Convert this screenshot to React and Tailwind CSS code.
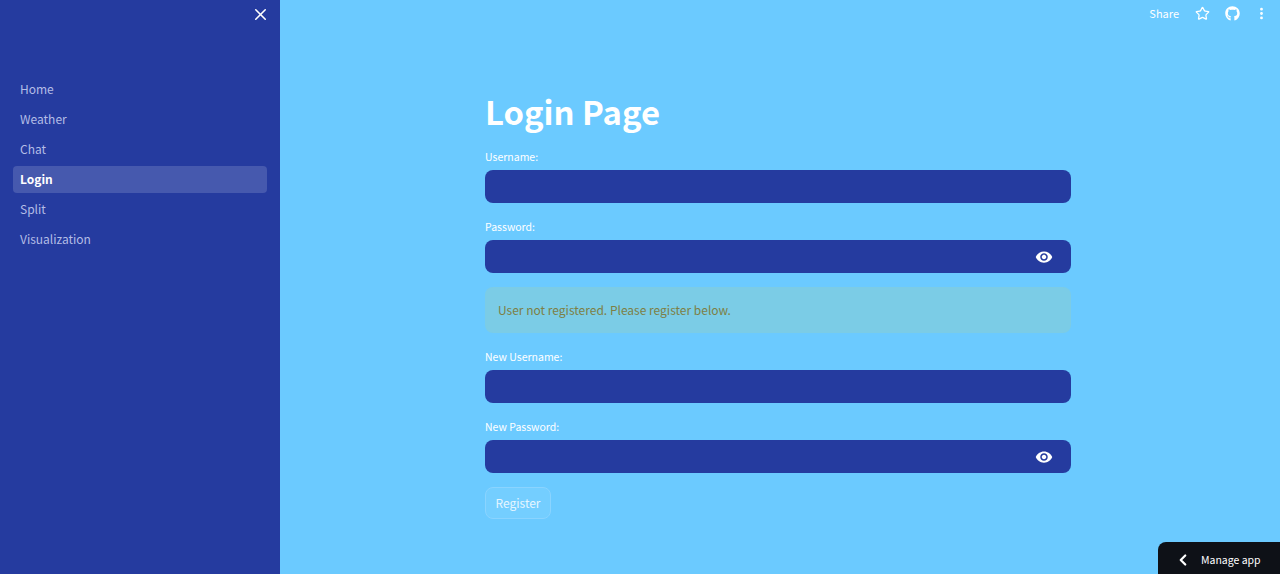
import React from 'react';
import { X, Star, EllipsisVertical, ChevronLeft } from 'lucide-react';
import { FaGithub } from 'react-icons/fa';

const navItems = ['Home', 'Weather', 'Chat', 'Login', 'Split', 'Visualization'];

function EyeIcon() {
  return (
    <svg viewBox="0 0 24 24" className="w-[18px] h-[18px] fill-white">
      <path d="M12 4.5C7 4.5 2.73 7.61 1 12c1.73 4.39 6 7.5 11 7.5s9.27-3.11 11-7.5c-1.73-4.39-6-7.5-11-7.5zM12 17c-2.76 0-5-2.24-5-5s2.24-5 5-5 5 2.24 5 5-2.24 5-5 5zm0-8c-1.66 0-3 1.34-3 3s1.34 3 3 3 3-1.34 3-3-1.34-3-3-3z" />
    </svg>
  );
}

function Field({ label, password }) {
  return (
    <div>
      <div className="h-[20px] text-[10.5px] leading-[20px] text-white mb-[3px]">{label}</div>
      <div className="h-[33px] rounded-lg bg-[#253b9f] flex items-center justify-end pr-[18px]">
        {password && <EyeIcon />}
      </div>
    </div>
  );
}

export default function App() {
  return (
    <div className="relative flex h-[574px] overflow-hidden bg-[#6bcaff] font-['Noto_Sans_CJK_SC','Source_Sans_Pro',sans-serif]">
      {/* Sidebar */}
      <aside className="w-[280px] shrink-0 bg-[#253b9f] flex flex-col">
        <div className="h-[76px] flex justify-end items-start pt-[5px] pr-[10px]">
          <X className="w-[19px] h-[19px] text-white" strokeWidth={2} />
        </div>
        <nav className="flex flex-col px-[13px]">
          {navItems.map((item) => (
            <div
              key={item}
              className={
                item === 'Login'
                  ? 'h-[27px] mb-[3px] pb-[2px] rounded bg-[#4659ae] px-[7px] flex items-center text-[12px] font-bold text-white'
                  : 'h-[27px] mb-[3px] pb-[2px] rounded px-[7px] flex items-center text-[12px] text-[#b4bde6]'
              }
            >
              {item}
            </div>
          ))}
        </nav>
      </aside>

      {/* Main content */}
      <main className="flex-1 pl-[205px] pr-[209px] pt-[87px]">
        <h1 className="h-[50px] text-[32.8px] leading-[48px] font-bold text-white mb-[10px]">Login Page</h1>
        <div className="flex flex-col gap-[14px]">
          <Field label="Username:" />
          <Field label="Password:" password />
          <div className="h-[46px] rounded-lg bg-[#7bcce6] px-[13px] flex items-center text-[12px] text-[#7d7f45]">
            User not registered. Please register below.
          </div>
          <div className="flex flex-col gap-[14px]">
            <Field label="New Username:" />
            <Field label="New Password:" password />
          </div>
          <div className="w-[66px] h-[32px] rounded-lg border border-[#8ad4ff] bg-[#74ceff] flex items-center justify-center text-[12px] text-[#e6f6ff]">
            Register
          </div>
        </div>
      </main>

      {/* Top toolbar */}
      <div className="absolute top-0 right-0 h-[26px] flex items-center pr-[11px] text-white">
        <span className="text-[11px] mr-[16px]">Share</span>
        <Star className="w-[15px] h-[15px] mr-[15px]" strokeWidth={2} />
        <FaGithub className="w-[15px] h-[15px] mr-[14px]" />
        <EllipsisVertical className="w-[15px] h-[15px]" strokeWidth={2.5} />
      </div>

      {/* Manage app badge */}
      <div className="absolute bottom-0 right-0 w-[122px] h-[32px] rounded-tl-lg bg-[#0e1117] flex items-center pl-[16px] pt-[4px] text-white">
        <ChevronLeft className="w-[18px] h-[18px] mr-[9px]" strokeWidth={3} />
        <span className="text-[10.5px]">Manage app</span>
      </div>
    </div>
  );
}
